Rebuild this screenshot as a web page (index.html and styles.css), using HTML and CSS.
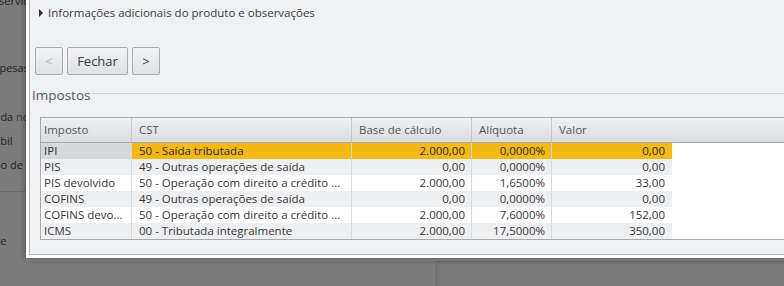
FILE: index.html
```html
<!DOCTYPE html>
<html lang="pt-BR">
<head>
  <meta charset="UTF-8">
  <title>Impostos do item</title>
  <link rel="stylesheet" href="styles.css">
</head>
<body>
  <!-- Page behind the modal (dimmed) -->
  <div class="backdrop">
    <div class="page-strip">
      <div class="page-line first">serviços</div>
      <div class="page-line despesas">Despesas</div>
      <div class="page-line entrada">Entrada <span class="page-link">nota</span></div>
      <div class="page-line contabil">Contábil</div>
      <div class="page-line tipo">Tipo de entrada</div>
      <div class="page-rule"></div>
      <div class="page-line cliente">Cliente</div>
    </div>
    <div class="page-main">
      <div class="page-band"></div>
      <div class="page-box"></div>
    </div>
  </div>

  <!-- Modal dialog -->
  <div class="dialog">
    <div class="dialog-panel">
      <div class="expander">
        <span class="caret"></span>
        Informações adicionais do produto e observações
      </div>

      <div class="nav-buttons">
        <button class="btn btn-arrow" disabled>&lt;</button>
        <button class="btn btn-close">Fechar</button>
        <button class="btn btn-arrow">&gt;</button>
      </div>

      <div class="group">
        <div class="group-legend">
          <span class="legend-text">Impostos</span>
          <span class="group-rule"></span>
        </div>

        <div class="grid">
          <div class="grid-row grid-head">
            <div class="cell first">Imposto</div>
            <div class="cell">CST</div>
            <div class="cell">Base de cálculo</div>
            <div class="cell">Alíquota</div>
            <div class="cell last">Valor</div>
            <div class="cell filler"></div>
          </div>

          <div class="grid-row selected">
            <div class="cell first">IPI</div>
            <div class="cell">50 - Saída tributada</div>
            <div class="cell num">2.000,00</div>
            <div class="cell num">0,0000%</div>
            <div class="cell num last">0,00</div>
            <div class="cell filler"></div>
          </div>
          <div class="grid-row alt">
            <div class="cell first">PIS</div>
            <div class="cell">49 - Outras operações de saída</div>
            <div class="cell num">0,00</div>
            <div class="cell num">0,0000%</div>
            <div class="cell num last">0,00</div>
            <div class="cell filler"></div>
          </div>
          <div class="grid-row">
            <div class="cell first">PIS devolvido</div>
            <div class="cell">50 - Operação com direito a crédito vinculada exclusivamente a receita tributada</div>
            <div class="cell num">2.000,00</div>
            <div class="cell num">1,6500%</div>
            <div class="cell num last">33,00</div>
            <div class="cell filler"></div>
          </div>
          <div class="grid-row alt">
            <div class="cell first">COFINS</div>
            <div class="cell">49 - Outras operações de saída</div>
            <div class="cell num">0,00</div>
            <div class="cell num">0,0000%</div>
            <div class="cell num last">0,00</div>
            <div class="cell filler"></div>
          </div>
          <div class="grid-row">
            <div class="cell first">COFINS devolvido</div>
            <div class="cell">50 - Operação com direito a crédito vinculada exclusivamente a receita tributada</div>
            <div class="cell num">2.000,00</div>
            <div class="cell num">7,6000%</div>
            <div class="cell num last">152,00</div>
            <div class="cell filler"></div>
          </div>
          <div class="grid-row alt">
            <div class="cell first">ICMS</div>
            <div class="cell">00 - Tributada integralmente</div>
            <div class="cell num">2.000,00</div>
            <div class="cell num">17,5000%</div>
            <div class="cell num last">350,00</div>
            <div class="cell filler"></div>
          </div>
        </div>
      </div>
    </div>
  </div>
</body>
</html>
```

FILE: styles.css
```css
:root {
  --overlay: #7b7b7b;
  --panel-bg: #f0f1f3;
  --panel-border: #b3b4b7;
  --text: #363636;
  --head-text: #555;
  --grid-border: #a7a9ac;
  --cell-line: #d8d9dc;
  --row-alt: #eeeff1;
  --selected: #f4b915;
  --selected-key: #d6d8dc;
}

body, html {
  margin: 0;
  padding: 0;
}

body {
  width: 784px;
  height: 286px;
  overflow: hidden;
  position: relative;
  background: var(--overlay);
  font-family: 'Open Sans', 'Liberation Sans', sans-serif;
  font-size: 11.5px;
  color: var(--text);
}

/* Dimmed page behind the modal */
.backdrop {
  display: flex;
  height: 100%;
}

.page-strip {
  width: 26px;
  flex-shrink: 0;
  overflow: hidden;
  font-size: 11px;
  color: #1f1f1f;
}

.page-line {
  height: 24px;
  line-height: 24px;
  white-space: nowrap;
}

.page-line.first { margin-top: -11px; margin-left: -1px; }
.page-line.despesas { margin-top: 43px; margin-left: -20px; }
.page-line.entrada { margin-top: 25px; margin-left: -27px; }
.page-line.contabil { margin-left: -30px; }
.page-line.tipo { margin-left: -15px; }
.page-line.cliente { margin-top: 37px; margin-left: -29px; }

.page-link {
  color: #4b2550;
}

.page-rule {
  margin-top: 14px;
  height: 1px;
  background: #6d6d6d;
}

.page-main {
  flex: 1;
  display: flex;
  flex-direction: column;
}

.page-band {
  margin-top: 258px;
  height: 3px;
  background: #888;
}

.page-box {
  flex: 1;
  margin-left: 410px;
  border-top: 1px solid #666;
  border-left: 1px solid #6e6e6e;
  background: #787878;
}

/* Modal */
.dialog {
  position: absolute;
  left: 26px;
  top: -20px;
  width: 820px;
  height: 278px;
  box-sizing: border-box;
  border: 3px solid #fff;
  box-shadow: 0 0 7px rgba(0, 0, 0, 0.45);
}

.dialog-panel {
  height: 100%;
  box-sizing: border-box;
  border: 1px solid var(--panel-border);
  background: var(--panel-bg);
  padding-top: 16px;
}

.expander {
  height: 26px;
  line-height: 26px;
  padding-left: 9px;
  display: flex;
  align-items: center;
  color: #3a3a3a;
}

.caret {
  width: 0;
  height: 0;
  border-left: 4px solid #2b2b2b;
  border-top: 4px solid transparent;
  border-bottom: 4px solid transparent;
  margin-right: 5px;
}

.nav-buttons {
  display: flex;
  gap: 4px;
  margin: 21px 0 0 5px;
}

.btn {
  height: 28px;
  box-sizing: border-box;
  border: 1px solid #a9abae;
  border-radius: 2px;
  background: linear-gradient(#f1f2f3, #e0e1e3);
  font-family: 'Open Sans', 'Liberation Sans', sans-serif;
  font-size: 13px;
  color: #3a3a3a;
  padding: 0;
}

.btn-arrow {
  width: 28px;
}

.btn-close {
  width: 61px;
}

.btn:disabled {
  color: #b4b4b4;
}

/* Impostos group */
.group-legend {
  display: flex;
  margin-top: 12px;
  height: 16px;
  padding-left: 2px;
}

.legend-text {
  font-size: 13.5px;
  line-height: 16px;
  color: #575757;
}

.group-rule {
  flex: 1;
  margin: 6px 0 0 2px;
  height: 0;
  border-top: 1px solid #d4d5d8;
}

.grid {
  margin: 14px 0 0 10px;
  border: 1px solid var(--grid-border);
  background: #fff;
}

.grid-row {
  display: grid;
  grid-template-columns: 91px 220px 120px 80px 120px 1fr;
  height: 16px;
  line-height: 16px;
}

.cell {
  box-sizing: border-box;
  padding: 0 6px 0 7px;
  border-right: 1px solid var(--cell-line);
  white-space: nowrap;
  overflow: hidden;
  text-overflow: ellipsis;
}

.cell.first {
  padding-left: 3px;
}

.cell.num {
  text-align: right;
}

.cell.last {
  border-right: none;
  padding-right: 7px;
}

.cell.filler {
  border-right: none;
  background: #fff;
}

.grid-row.alt .cell {
  background: var(--row-alt);
}

.grid-row.alt .cell.filler {
  background: #fff;
}

.grid-row.selected .cell {
  background: var(--selected);
  color: #2a2a2a;
}

.grid-row.selected .cell.first {
  background: var(--selected-key);
}

.grid-row.selected .cell.filler {
  background: #fff;
}

.grid-head {
  height: 24px;
  line-height: 24px;
  border-bottom: 1px solid var(--grid-border);
  background: linear-gradient(#eeeff1, #dcdde0);
  color: var(--head-text);
}

.grid-head .cell {
  border-right-color: #c4c6c9;
  background: none;
}
```
